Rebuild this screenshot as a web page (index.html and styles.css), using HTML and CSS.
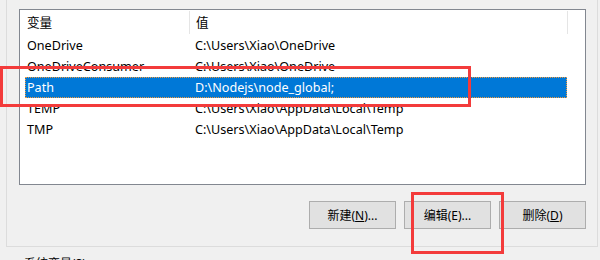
FILE: index.html
```html
<!DOCTYPE html>
<html>
<head>
<title>环境变量</title>
<link rel="stylesheet" href="styles.css">
</head>
<body>

<div class="group">
  <div class="listbox">
    <div class="list-head">
      <div class="col-name">变量</div>
      <div class="col-value">值</div>
      <div class="col-rest"></div>
    </div>
    <div class="row">
      <div class="col-name">OneDrive</div>
      <div class="col-value">C:\Users\Xiao\OneDrive</div>
    </div>
    <div class="row">
      <div class="col-name">OneDriveConsumer</div>
      <div class="col-value">C:\Users\Xiao\OneDrive</div>
    </div>
    <div class="row selected">
      <div class="col-name">Path</div>
      <div class="col-value">D:\Nodejs\node_global;</div>
    </div>
    <div class="row">
      <div class="col-name">TEMP</div>
      <div class="col-value">C:\Users\Xiao\AppData\Local\Temp</div>
    </div>
    <div class="row">
      <div class="col-name">TMP</div>
      <div class="col-value">C:\Users\Xiao\AppData\Local\Temp</div>
    </div>
  </div>

  <div class="buttons">
    <button type="button">新建(<u>N</u>)...</button>
    <button type="button">编辑(E)...</button>
    <button type="button">删除(<u>D</u>)</button>
  </div>
</div>

<div class="next-label">系统变量(<u>S</u>)</div>

<div class="mark mark-row"></div>
<div class="mark mark-btn"></div>

</body>
</html>
```

FILE: styles.css
```css
body {
  font-family: "Segoe UI", "Noto Sans", "Noto Sans CJK SC", sans-serif;
  font-size: 12px;
  color: #000;
  background-color: #f0f0f0;
  margin: 0;
  padding: 0;
  width: 600px;
  height: 260px;
  overflow: hidden;
  position: relative;
}

.group {
  margin-left: 6px;
  width: 590px;
  border: 1px solid #dcdcdc;
  border-top: none;
  padding-top: 9px;
  padding-bottom: 17px;
}

.listbox {
  margin-left: 12px;
  width: 565px;
  height: 174px;
  background-color: #fff;
  border: 1px solid #828790;
  font-size: 12.6px;
}

.list-head {
  display: flex;
  height: 25px;
}

.list-head .col-name {
  width: 162px;
  padding-left: 7px;
  border-right: 1px solid #e5e5e5;
  margin: 1px 0;
  line-height: 24px;
}

.list-head .col-value {
  width: 371px;
  padding-left: 6px;
  border-right: 1px solid #e5e5e5;
  margin: 1px 0;
  line-height: 24px;
}

.row {
  display: flex;
  height: 20px;
  padding-top: 1px;
  line-height: 20px;
  margin-left: 5px;
  width: 542px;
}

.row .col-name {
  width: 161px;
  padding-left: 2px;
}

.row .col-value {
  padding-left: 7px;
}

.row.selected {
  background-color: #0078d7;
  color: #fff;
  outline: 1px dotted #f29a3c;
  outline-offset: -1px;
}

.buttons {
  display: flex;
  justify-content: flex-end;
  gap: 8px;
  margin-top: 16px;
  padding-right: 11px;
}

button {
  font-family: "Segoe UI", "Noto Sans", "Noto Sans CJK SC", sans-serif;
  font-size: 12px;
  color: #000;
  width: 87px;
  height: 28px;
  background-color: #e1e1e1;
  border: 1px solid #adadad;
  padding: 0;
}

.next-label {
  margin-left: 24px;
  margin-top: 9px;
  line-height: 16px;
}

.mark {
  position: absolute;
  border: 3px solid #f33b3b;
}

.mark-row {
  left: 0;
  top: 66px;
  width: 465px;
  height: 35px;
}

.mark-btn {
  left: 411px;
  top: 192px;
  width: 87px;
  height: 56px;
}
```
